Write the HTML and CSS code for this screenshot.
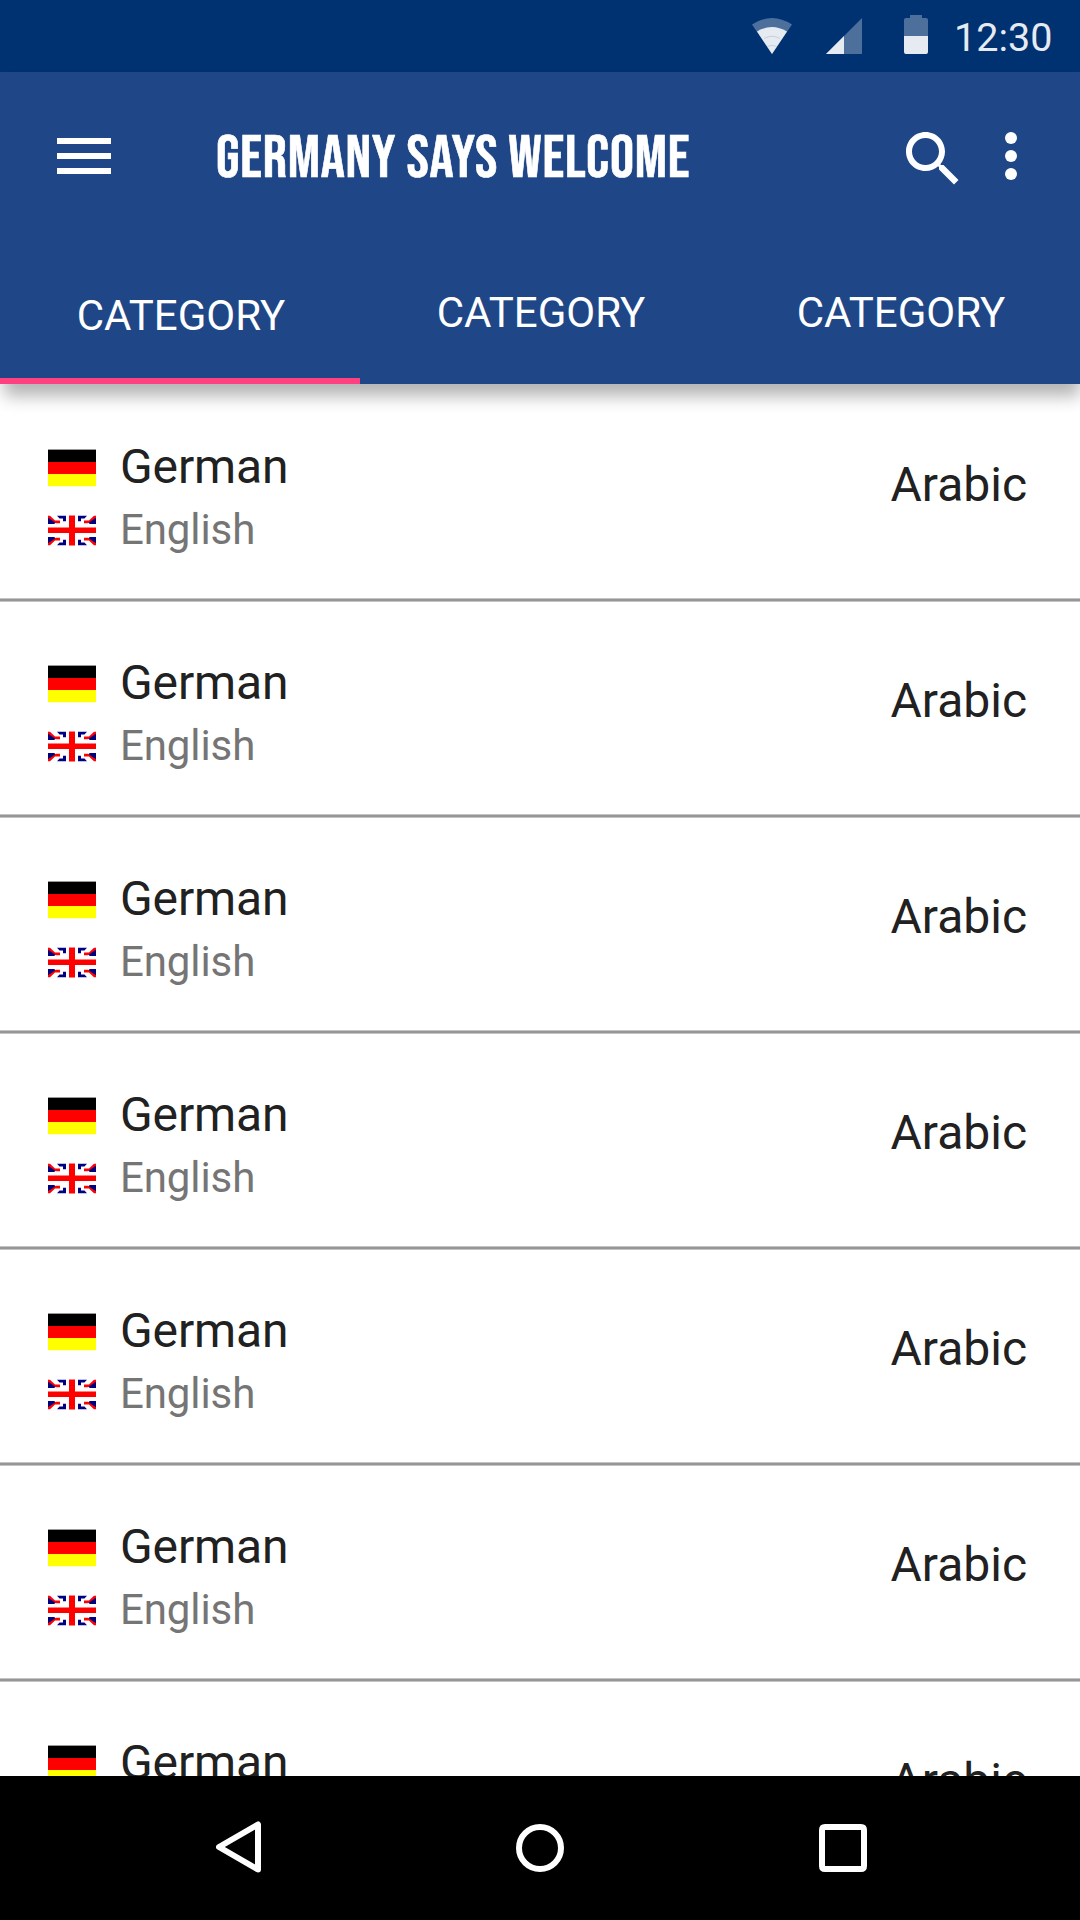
FILE: index.html
```html
<!DOCTYPE html>
<html lang="en">
<head>
<meta charset="utf-8">
<title>Germany Says Welcome</title>
<link rel="stylesheet" href="styles.css">
</head>
<body>
<svg class="defs" aria-hidden="true">
  <symbol id="flag-de" viewBox="0 0 48 38">
    <rect width="48" height="2" fill="#999"/>
    <rect y="1" width="48" height="12" fill="#000"/>
    <rect y="13" width="48" height="12" fill="#f00"/>
    <rect y="25" width="48" height="12" fill="#ff0"/>
    <rect y="37" width="48" height="1" fill="#ffffc8"/>
  </symbol>
  <symbol id="flag-quarter" viewBox="0 0 18 9">
    <path d="M9 .8H18V6.200H15V3.500H11.500Z" fill="#000080"/>
    <path d="M0 2V9H6L8 7.500Z" fill="#000080"/>
    <path d="M0 .8H2L7 5.500H12V8.300H8L0 3.500Z" fill="#f00"/>
    <path d="M0 3.600L6.500 8.200" stroke="#000080" stroke-width="1.600"/>
  </symbol>
  <symbol id="flag-uk" viewBox="0 0 48 31">
    <rect width="48" height="31" fill="#fff"/>
    <use href="#flag-quarter" width="18" height="9"/>
    <use href="#flag-quarter" width="18" height="9" transform="matrix(-1 0 0 1 48 0)"/>
    <use href="#flag-quarter" width="18" height="9" transform="matrix(1 0 0 -1 0 31)"/>
    <use href="#flag-quarter" width="18" height="9" transform="matrix(-1 0 0 -1 48 31)"/>
    <path d="M21 .5H27V30.500H21ZM0 12.500H48V18H0Z" fill="#f00"/>
  </symbol>
</svg>
<div class="screen">
  <div class="status-bar">
    <svg class="wifi" width="40" height="36" viewBox="0 0 40 36">
      <path d="M0 6.500Q20 -6.500 40 6.500L20 36Z" fill="#4d6f9b"/>
      <path d="M5 13.500Q20 4.500 35 13.500L20 36Z" fill="#e6eaf1"/>
      <path d="M12 20.500Q20 16 28 20.500M15 28.500Q20 26 25 28.500" fill="none" stroke="#c6d0df"/>
    </svg>
    <svg class="signal" width="36" height="36" viewBox="0 0 36 36">
      <path d="M0 36L36 0V36Z" fill="#4d6f9b"/>
      <path d="M0 36L18 18V36Z" fill="#e6eaf1"/>
    </svg>
    <svg class="battery" width="24" height="39" viewBox="0 0 24 39">
      <path d="M6 0H18V3H22Q24 3 24 5V21H0V5Q0 3 2 3H6Z" fill="#4d6f9b"/>
      <path d="M0 21H24V37Q24 39 22 39H2Q0 39 0 37Z" fill="#e6eaf1"/>
    </svg>
    <span class="clock">12:30</span>
  </div>
  <header class="header">
    <div class="toolbar">
      <svg class="menu" width="54" height="36" viewBox="0 0 54 36"><path d="M0 0H54V6H0ZM0 15H54V21H0ZM0 30H54V36H0Z" fill="#fff"/></svg>
      <h1 class="title">GERMANY SAYS WELCOME</h1>
      <svg class="search" width="72" height="72" viewBox="0 0 24 24"><path fill="#fff" d="M15.500 14h-.79l-.28-.27C15.410 12.590 16 11.110 16 9.500 16 5.910 13.090 3 9.500 3S3 5.910 3 9.500 5.910 16 9.500 16c1.610 0 3.090-.59 4.230-1.570l.27.28v.79l5 4.990L20.490 19l-4.990-5zm-6 0C7.010 14 5 11.990 5 9.500S7.010 5 9.500 5 14 7.010 14 9.500 11.990 14 9.500 14z"/></svg>
      <svg class="more" width="12" height="48" viewBox="0 0 12 48" fill="#fff"><circle cx="6" cy="6" r="6"/><circle cx="6" cy="24" r="6"/><circle cx="6" cy="42" r="6"/></svg>
    </div>
    <nav class="tabs">
      <div class="tab active">CATEGORY</div>
      <div class="tab">CATEGORY</div>
      <div class="tab">CATEGORY</div>
    </nav>
  </header>
  <main class="list">
    <div class="row"><div class="words"><div class="german"><svg class="de"><use href="#flag-de"/></svg>German</div><div class="english"><svg class="uk"><use href="#flag-uk"/></svg>English</div></div><div class="arabic">Arabic</div></div>
    <div class="row"><div class="words"><div class="german"><svg class="de"><use href="#flag-de"/></svg>German</div><div class="english"><svg class="uk"><use href="#flag-uk"/></svg>English</div></div><div class="arabic">Arabic</div></div>
    <div class="row"><div class="words"><div class="german"><svg class="de"><use href="#flag-de"/></svg>German</div><div class="english"><svg class="uk"><use href="#flag-uk"/></svg>English</div></div><div class="arabic">Arabic</div></div>
    <div class="row"><div class="words"><div class="german"><svg class="de"><use href="#flag-de"/></svg>German</div><div class="english"><svg class="uk"><use href="#flag-uk"/></svg>English</div></div><div class="arabic">Arabic</div></div>
    <div class="row"><div class="words"><div class="german"><svg class="de"><use href="#flag-de"/></svg>German</div><div class="english"><svg class="uk"><use href="#flag-uk"/></svg>English</div></div><div class="arabic">Arabic</div></div>
    <div class="row"><div class="words"><div class="german"><svg class="de"><use href="#flag-de"/></svg>German</div><div class="english"><svg class="uk"><use href="#flag-uk"/></svg>English</div></div><div class="arabic">Arabic</div></div>
    <div class="row"><div class="words"><div class="german"><svg class="de"><use href="#flag-de"/></svg>German</div></div><div class="arabic">Arabic</div></div>
  </main>
  <div class="nav-bar">
    <svg class="back" width="48" height="54" viewBox="0 0 48 54"><path d="M3 27L42 4.500V49.500Z" fill="none" stroke="#fff" stroke-width="6" stroke-linejoin="round"/></svg>
    <svg class="home" width="48" height="48" viewBox="0 0 48 48"><circle cx="24" cy="24" r="21" fill="none" stroke="#fff" stroke-width="6"/></svg>
    <svg class="recent" width="48" height="48" viewBox="0 0 48 48"><path fill="#fff" fill-rule="evenodd" d="M6 0H42Q48 0 48 6V42Q48 48 42 48H6Q0 48 0 42V6Q0 0 6 0ZM6 6V42H42V6Z"/></svg>
  </div>
</div>
</body>
</html>
```
FILE: styles.css
```css
* { box-sizing: border-box; }

body {
  margin: 0;
  background: #fff;
  font-family: Roboto, sans-serif;
}

svg { display: block; flex: none; }

.defs { display: none; }

.screen {
  display: flex;
  flex-direction: column;
  width: 1080px;
  height: 1920px;
  overflow: hidden;
}

.status-bar {
  display: flex;
  flex: none;
  align-items: flex-start;
  height: 72px;
  padding-left: 752px;
  background: #003170;
}

.wifi { margin-top: 18px; }
.signal { margin: 18px 0 0 34px; }
.battery { margin: 15px 0 0 42px; }

.clock {
  margin: 14px 0 0 26px;
  color: #e6eaf1;
  font-size: 39.5px;
  line-height: 48px;
}

.header {
  position: relative;
  z-index: 1;
  flex: none;
  height: 312px;
  background: #1f4787;
  color: #fff;
  box-shadow: 2px 14px 16px -2px rgba(0, 0, 0, 0.3);
}

.toolbar {
  display: flex;
  align-items: center;
  height: 168px;
  padding-left: 57px;
}

.title {
  width: 680px;
  margin: 5px 0 0 105px;
  font: 400 60px/72px "Bebas Neue", "Roboto Condensed", sans-serif;
  letter-spacing: 0.74px;
  white-space: nowrap;
  -webkit-text-stroke: 0.6px #fff;
}

.search { margin: 6px 0 0 1px; }
.more { margin-left: 36px; }

.tabs {
  display: grid;
  grid-template-columns: repeat(3, 1fr);
  height: 144px;
}

.tab {
  padding: 43px 0 0 2px;
  text-align: center;
  font-size: 42px;
  line-height: 60px;
}

.tab.active {
  padding-top: 46px;
  border-bottom: 6px solid #ff4081;
}

.list {
  flex: 1;
  min-height: 0;
  padding-top: 2px;
  overflow: hidden;
}

.row {
  display: flex;
  justify-content: space-between;
  height: 216px;
  padding: 48px 53px 0 48px;
  background: linear-gradient(#c4c4c4 1px, #969696 1px, #969696 3px, #c4c4c4 3px) bottom / 100% 4px no-repeat;
}

.german,
.english {
  display: flex;
  align-items: center;
  gap: 24px;
}

.german {
  color: #212121;
  font-size: 48px;
  line-height: 65px;
  letter-spacing: -0.1px;
}

.english {
  color: #757575;
  font-size: 42px;
  line-height: 61px;
  letter-spacing: -0.1px;
}

.de { width: 48px; height: 38px; margin-top: 2px; }
.uk { width: 48px; height: 31px; margin-top: 2px; }

.arabic {
  margin-top: 18px;
  color: #212121;
  font-size: 48px;
  line-height: 65px;
}

.nav-bar {
  display: flex;
  flex: none;
  align-items: center;
  height: 144px;
  padding-left: 216px;
  background: #000;
}

.back { margin-bottom: 3px; }
.home { margin-left: 252px; }
.recent { margin-left: 255px; }
```
